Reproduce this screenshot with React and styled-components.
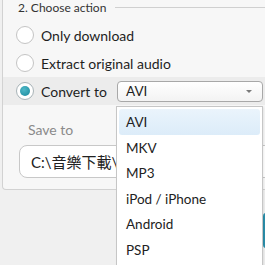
import React from "react";
import styled, { createGlobalStyle } from "styled-components";

const Global = createGlobalStyle`
  html, body { margin: 0; padding: 0; background: #f0f0f0; overflow: hidden; }
  body { font-family: Lato, "Noto Sans", "Noto Sans CJK TC", sans-serif; color: #1e1e1e; }
`;

const Page = styled.div`
  position: relative;
  width: 265px;
  height: 265px;
  overflow: hidden;
`;

const Panel = styled.div`
  margin-left: 2px;
  width: 320px;
  height: 190px;
  box-sizing: border-box;
  background: #f7f7f7;
  border: 1px solid #d2d2d2;
  border-top: none;
  border-radius: 0 0 4px 4px;
  display: flex;
  flex-direction: column;
`;

const SectionHeader = styled.div`
  display: flex;
  align-items: center;
  gap: 9px;
  height: 15px;
  padding-left: 15px;
  font-size: 12px;
  color: #333;
`;

const HeaderLine = styled.div`
  flex: 1;
  height: 1px;
  background: #d0d0d0;
`;

const Row = styled.div`
  display: flex;
  align-items: center;
  gap: 7px;
  height: 28px;
  padding-left: 13px;
  font-size: 14px;
  background: ${(p) => (p.$active ? "#ececec" : "transparent")};
  margin-top: ${(p) => p.$mt || 0}px;
`;

const Radio = styled.span`
  width: 18px;
  height: 18px;
  box-sizing: border-box;
  border-radius: 50%;
  border: 1px solid ${(p) => (p.$checked ? "#a9b4b8" : "#c4c4c4")};
  background: #fff;
  display: flex;
  align-items: center;
  justify-content: center;
  flex: none;
  &::after {
    content: "";
    display: ${(p) => (p.$checked ? "block" : "none")};
    width: 10px;
    height: 10px;
    border-radius: 50%;
    background: radial-gradient(circle at 40% 35%, #4fb9c9, #17879a);
  }
`;

const RowLabel = styled.span`
  width: ${(p) => (p.$w ? `${p.$w}px` : "auto")};
  flex: none;
`;

const Combo = styled.div`
  width: 146px;
  height: 21px;
  box-sizing: border-box;
  border: 1px solid #a8a8a8;
  border-radius: 4px;
  background: linear-gradient(#ffffff, #f3f3f3);
  display: flex;
  align-items: center;
  justify-content: space-between;
  padding: 0 10px 0 8px;
  font-size: 13.5px;
  flex: none;
`;

const Caret = styled.span`
  width: 0;
  height: 0;
  border-left: 3px solid transparent;
  border-right: 3px solid transparent;
  border-top: 3px solid #7a7a7a;
`;

const SaveLabel = styled.div`
  padding-left: 25px;
  margin-top: 15px;
  font-size: 14px;
  color: #8a8a8a;
  height: 20px;
  line-height: 20px;
`;

const PathInput = styled.div`
  margin: 5px 0 0 16px;
  height: 33px;
  box-sizing: border-box;
  border: 1px solid #c8c8c8;
  border-radius: 8px;
  background: #fff;
  display: flex;
  align-items: center;
  padding-left: 11px;
  font-size: 15px;
  color: #222;
  white-space: nowrap;
`;

const Footer = styled.div`
  display: flex;
  justify-content: flex-end;
  margin-top: 23px;
`;

const GoButton = styled.div`
  width: 60px;
  height: 35px;
  margin-right: -58px;
  background: #2a8fab;
  border-radius: 3px;
`;

const Popup = styled.div`
  position: absolute;
  left: 116px;
  top: 106px;
  width: 147px;
  height: 170px;
  box-sizing: border-box;
  background: #fff;
  border: 1px solid #c6c6c6;
  box-shadow: 1px 1px 2px rgba(0, 0, 0, 0.08);
  padding: 2px;
  display: flex;
  flex-direction: column;
`;

const Item = styled.div`
  height: 25.5px;
  display: flex;
  align-items: center;
  padding-left: 7px;
  padding-top: 1px;
  box-sizing: border-box;
  font-size: 13.5px;
  border-radius: 3px;
  flex: none;
  color: #222;
  background: ${(p) =>
    p.$hl ? "linear-gradient(#eaf4fc, #dcecf9)" : "transparent"};
`;

const formats = ["AVI", "MKV", "MP3", "iPod / iPhone", "Android", "PSP"];

export default function App() {
  return (
    <Page>
      <Global />
      <Panel>
        <SectionHeader>
          <span>2. Choose action</span>
          <HeaderLine />
        </SectionHeader>
        <Row $mt={6}>
          <Radio />
          <RowLabel>Only download</RowLabel>
        </Row>
        <Row>
          <Radio />
          <RowLabel>Extract original audio</RowLabel>
        </Row>
        <Row $active>
          <Radio $checked />
          <RowLabel $w={69}>Convert to</RowLabel>
          <Combo>
            <span>AVI</span>
            <Caret />
          </Combo>
        </Row>
        <SaveLabel>Save to</SaveLabel>
        <PathInput>C:\音樂下載\音樂下載\Downloads</PathInput>
      </Panel>
      <Footer>
        <GoButton />
      </Footer>
      <Popup>
        {formats.map((f, i) => (
          <Item key={f} $hl={i === 0}>
            {f}
          </Item>
        ))}
      </Popup>
    </Page>
  );
}
